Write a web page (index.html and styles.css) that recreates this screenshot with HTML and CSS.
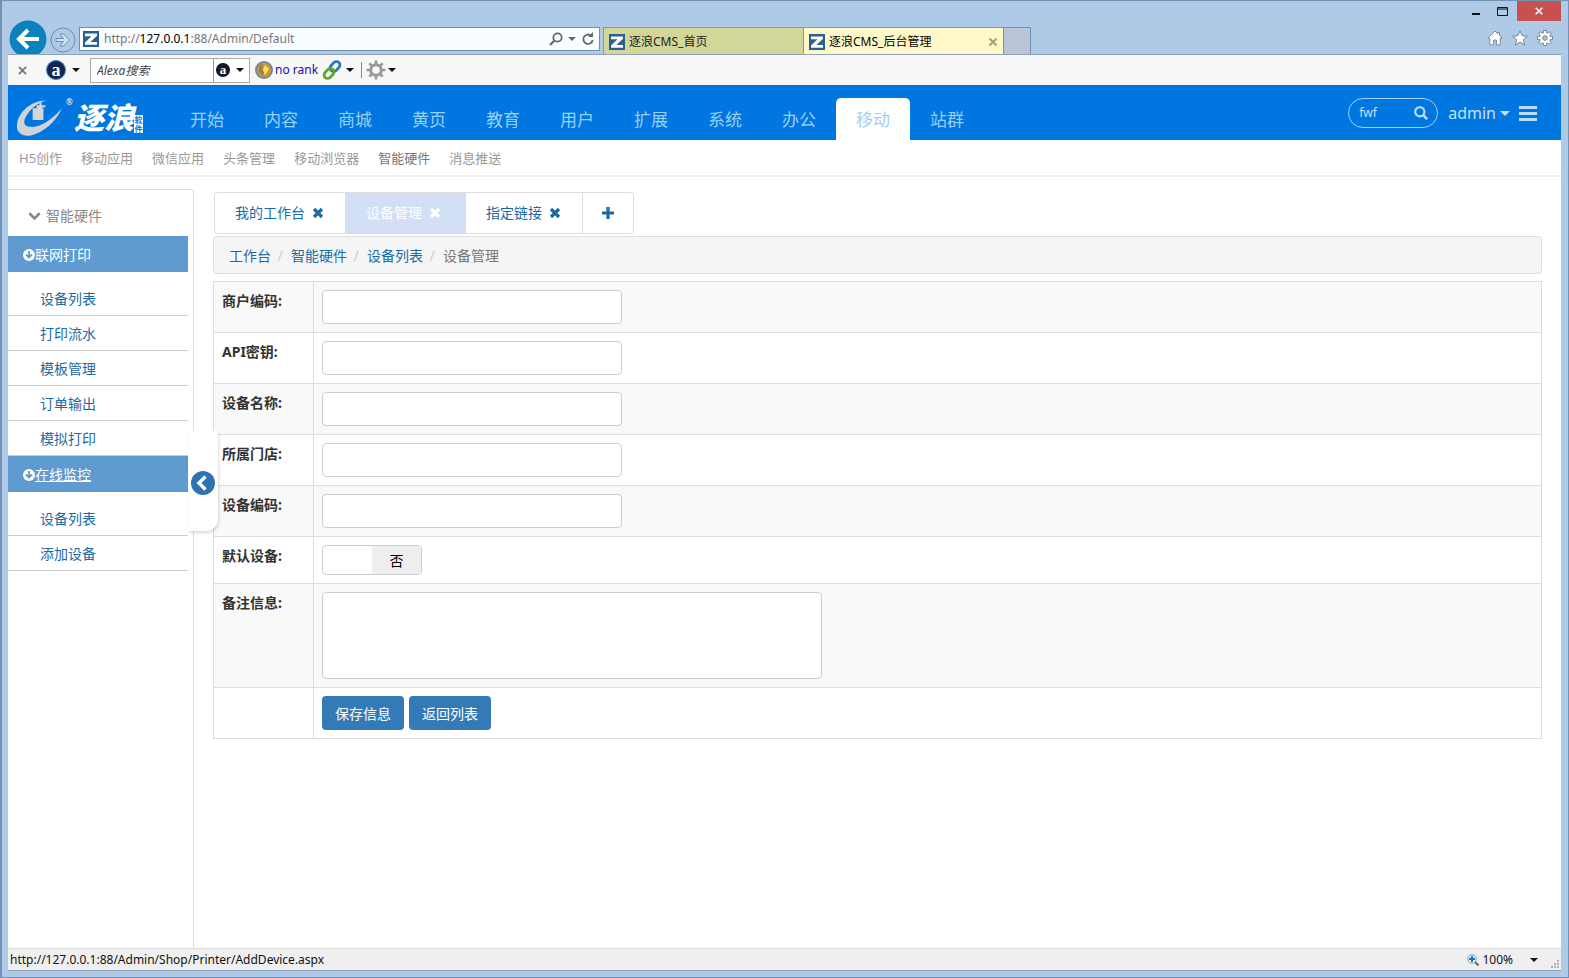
FILE: index.html
```html
<!DOCTYPE html>
<html lang="zh-CN">
<head>
<meta charset="utf-8">
<title>逐浪CMS_后台管理</title>
<link rel="stylesheet" href="styles.css">
</head>
<body>
<svg class="defs" aria-hidden="true">
  <symbol id="z" viewBox="0 0 16 16"><path fill="#28608f" d="M0 0h16v16H0z"/><path fill="#fff" d="M2 2.500h12v2.300L7.500 11H14v2.800H2v-2.300L8.500 5.300H2z"/></symbol>
  <symbol id="caret" viewBox="0 0 8 4"><path fill="currentColor" d="M0 0h8L4 4z"/></symbol>
  <symbol id="times" viewBox="0 0 12 12"><path stroke="currentColor" stroke-width="3.200" d="M2 2l8 8M10 2l-8 8"/></symbol>
  <symbol id="gear" viewBox="0 0 20 20"><path fill="none" stroke="currentColor" stroke-width="2.600" d="M10 .5v4M10 15.500v4M.5 10h4M15.500 10h4M3.300 3.300l2.900 2.900M13.800 13.800l2.900 2.900M16.700 3.300l-2.900 2.900M6.200 13.800l-2.900 2.900"/><circle cx="10" cy="10" r="5.300" fill="none" stroke="currentColor" stroke-width="3"/></symbol>
  <symbol id="down" viewBox="0 0 12 12"><circle cx="6" cy="6" r="6" fill="#fff"/><path d="M6 2v6M3 5.500l3 3 3-3" fill="none" stroke="#5f9ad0" stroke-width="1.800"/></symbol>
</svg>
<div class="window">
  <div class="chrome">
    <button class="back" aria-label="后退"><svg viewBox="0 0 38 38"><circle cx="19" cy="19" r="18.500" fill="#0b82bd"/><path d="M30 19H11M19 10l-9 9 9 9" fill="none" stroke="#fff" stroke-width="4"/></svg></button>
    <button class="forward" aria-label="前进"><svg viewBox="0 0 26 26"><circle cx="13" cy="13" r="12" fill="none" stroke="#6a88b3"/><path d="M6 11.500h7.500L10 7h3.500l6 6-6 6H10l3.500-4.500H6z" fill="#d5e2f3" stroke="#6a88b3"/></svg></button>
    <div class="address">
      <svg class="fav"><use href="#z"/></svg>
      <p class="url">http://<b>127.0.0.1</b>:88/Admin/Default</p>
      <svg class="i14" viewBox="0 0 14 14"><circle cx="8.500" cy="5.500" r="4.200" fill="none" stroke="#666" stroke-width="1.800"/><path d="M5.500 8.500l-4.500 4.500" stroke="#666" stroke-width="2.200"/></svg>
      <svg class="caret grey"><use href="#caret"/></svg>
      <svg class="i14" viewBox="0 0 14 14"><path d="M10.500 4A4.700 4.700 0 1 0 11.700 8" fill="none" stroke="#666" stroke-width="1.800"/><path d="M7 5h5V0z" fill="#666"/></svg>
    </div>
    <div class="btabs">
      <div class="btab"><svg class="fav"><use href="#z"/></svg><span>逐浪CMS_首页</span></div>
      <div class="btab on"><svg class="fav"><use href="#z"/></svg><span>逐浪CMS_后台管理</span><svg class="bx" viewBox="0 0 10 10"><path d="M1.500 1.500l7 7M8.500 1.500l-7 7" stroke="#a39f78" stroke-width="2"/></svg></div>
      <div class="newtab"></div>
    </div>
    <div class="right">
      <div class="winbtns">
        <svg class="min" viewBox="0 0 10 10"><path fill="#111" d="M1 7h8v2H1z"/></svg>
        <svg class="max" viewBox="0 0 11 9"><path fill="none" stroke="#111" d="M.5.5h10v8H.5zM1 2h9"/></svg>
        <button class="close" aria-label="关闭"><svg viewBox="0 0 8 8"><path d="M.7.7l6.600 6.600M7.300.7L.7 7.300" stroke="#fff" stroke-width="1.600"/></svg></button>
      </div>
      <div class="tools">
        <svg viewBox="0 0 16 16"><path d="M8 1L.8 8.300h2V15h3.800V10h2.800v5h3.800V8.300h2L12.500 5.200V2.500h-2v1z" fill="#fff" stroke="#7d8794"/></svg>
        <svg viewBox="0 0 16 16"><path d="M8 .8l2.100 5 5.200.4-4 3.500 1.300 5.300L8 12.200 3.400 15l1.300-5.300-4-3.500 5.200-.4z" fill="#fff" stroke="#7d8794"/></svg>
        <svg viewBox="0 0 16 16"><path d="M8 0v16M0 8h16M2.400 2.400l11.200 11.200M13.600 2.400L2.400 13.600" stroke="#7d8794" stroke-width="3.600"/><circle cx="8" cy="8" r="5.600" fill="#fff" stroke="#7d8794"/><path d="M8 1v14M1 8h14M3 3l10 10M13 3L3 13" stroke="#fff" stroke-width="2"/><circle cx="8" cy="8" r="2.300" fill="#aac4e2" stroke="#7d8794"/></svg>
      </div>
    </div>
  </div>

  <div class="alexa">
    <svg class="ax" viewBox="0 0 10 10"><path d="M1 1l8 8M9 1L1 9" stroke="#777" stroke-width="2"/></svg>
    <span class="abig">a</span><svg class="caret"><use href="#caret"/></svg>
    <div class="asearch"><input type="text" aria-label="Alexa搜索" placeholder="Alexa搜索"><span class="asmall">a</span><svg class="caret"><use href="#caret"/></svg></div>
    <svg class="globe" viewBox="0 0 18 18"><circle cx="9" cy="9" r="8" fill="#c99f35" stroke="#7d838f" stroke-width="2"/><path d="M4 5l4-2-1 5 3 2-2 5-4-4z" fill="#8b8368"/><path d="M10 4l4 4-4 6-2-5z" fill="#ffe052"/></svg>
    <span class="rank">no rank</span>
    <svg class="link" viewBox="0 0 20 20"><g fill="none" stroke-width="2.800"><rect x="9.500" y="1" width="7" height="11" rx="3.500" transform="rotate(45 13 6.500)" stroke="#2d78b5"/><rect x="3.500" y="8" width="7" height="11" rx="3.500" transform="rotate(45 7 13.500)" stroke="#5ba82c"/></g></svg>
    <svg class="caret"><use href="#caret"/></svg>
    <span class="bar"></span>
    <svg class="link gear"><use href="#gear"/></svg><svg class="caret"><use href="#caret"/></svg>
  </div>

  <header class="top">
    <a class="logo" href="#" aria-label="逐浪">
      <svg viewBox="0 0 48 38"><path d="M31 1C14 1 2 14 1 26c-1 8 5 12 13 11C29 34 41 22 47 9 37 20 25 29 15 28 8 28 7 23 10 18 14 10 21 4 31 1z" fill="#cfd3da"/><path d="M17 9h4V6h3V3h2v3h4v2h-3v1h1v12H17z" fill="#d8d5d6"/></svg>
      <span class="reg">®</span><span class="brand">逐浪</span><span class="seal">软件</span>
    </a>
    <nav class="nav">
      <a href="#">开始</a><a href="#">内容</a><a href="#">商城</a><a href="#">黄页</a><a href="#">教育</a><a href="#">用户</a><a href="#">扩展</a><a href="#">系统</a><a href="#">办公</a><a href="#" class="on">移动</a><a href="#">站群</a>
    </nav>
    <div class="user">
      <div class="search"><input type="text" value="fwf" aria-label="搜索"><svg viewBox="0 0 14 14"><circle cx="5.800" cy="5.800" r="4.600" fill="none" stroke="#b9dcf8" stroke-width="2.200"/><path d="M9.200 9.200l4 4" stroke="#b9dcf8" stroke-width="2.600"/></svg></div>
      <button class="admin">admin<svg class="ucaret"><use href="#caret"/></svg></button>
      <button class="menu" aria-label="菜单"><svg viewBox="0 0 18 15"><path fill="#b9dcf8" d="M0 0h18v3H0zM0 6h18v3H0zM0 12h18v3H0z"/></svg></button>
    </div>
  </header>

  <nav class="sub">
    <a href="#">H5创作</a><a href="#">移动应用</a><a href="#">微信应用</a><a href="#">头条管理</a><a href="#">移动浏览器</a><a href="#" class="on">智能硬件</a><a href="#">消息推送</a>
  </nav>

  <div class="body">
    <aside class="side">
      <h2><svg viewBox="0 0 14 10"><path d="M1.500 2L7 7.500 12.500 2" fill="none" stroke="#888" stroke-width="2.800"/></svg>智能硬件</h2>
      <h3><svg><use href="#down"/></svg>联网打印</h3>
      <ul><li><a href="#">设备列表</a></li><li><a href="#">打印流水</a></li><li><a href="#">模板管理</a></li><li><a href="#">订单输出</a></li><li><a href="#">模拟打印</a></li></ul>
      <h3><svg><use href="#down"/></svg><u>在线监控</u></h3>
      <ul><li><a href="#">设备列表</a></li><li><a href="#">添加设备</a></li></ul>
      <button class="collapse" aria-label="收起"><svg viewBox="0 0 24 24"><circle cx="12" cy="12" r="12" fill="#2f73b3"/><path d="M14.500 5.500L8 12l6.500 6.500" fill="none" stroke="#fff" stroke-width="3.400"/></svg></button>
    </aside>
    <main class="main">
      <div class="tabs">
        <button>我的工作台<svg><use href="#times"/></svg></button>
        <button class="on">设备管理<svg><use href="#times"/></svg></button>
        <button>指定链接<svg><use href="#times"/></svg></button>
        <button class="plus" aria-label="新增"><svg viewBox="0 0 12 12"><path d="M6 0v12M0 6h12" stroke="currentColor" stroke-width="3.200"/></svg></button>
      </div>
      <nav class="crumb"><a href="#">工作台</a><i>/</i><a href="#">智能硬件</a><i>/</i><a href="#">设备列表</a><i>/</i><span>设备管理</span></nav>
      <table class="form">
        <tr><th><label for="f1">商户编码:</label></th><td><input id="f1" type="text"></td></tr>
        <tr><th><label for="f2">API密钥:</label></th><td><input id="f2" type="text"></td></tr>
        <tr><th><label for="f3">设备名称:</label></th><td><input id="f3" type="text"></td></tr>
        <tr><th><label for="f4">所属门店:</label></th><td><input id="f4" type="text"></td></tr>
        <tr><th><label for="f5">设备编码:</label></th><td><input id="f5" type="text"></td></tr>
        <tr><th><label for="f6">默认设备:</label></th><td><label class="switch"><input id="f6" type="checkbox"><span>否</span></label></td></tr>
        <tr><th><label for="f7">备注信息:</label></th><td><textarea id="f7"></textarea></td></tr>
        <tr><th></th><td><div class="btns"><button>保存信息</button><button>返回列表</button></div></td></tr>
      </table>
    </main>
  </div>

  <footer class="status">
    <span>http://127.0.0.1:88/Admin/Shop/Printer/AddDevice.aspx</span>
    <div class="zoom">
      <svg class="zi" viewBox="0 0 12 12"><path d="M7.500 7.500l4 4" stroke="#6b665f" stroke-width="2"/><circle cx="5" cy="5" r="4.300" fill="#e3f1fb" stroke="#7aa5cc"/><path d="M5 2v6M2 5h6" stroke="#1f70b8" stroke-width="2"/></svg>
      <span>100%</span><svg class="caret"><use href="#caret"/></svg>
      <svg class="grip" viewBox="0 0 8 8"><path fill="#aab4c0" d="M6 0h2v2H6zM3 3h2v2H3zM6 3h2v2H6zM0 6h2v2H0zM3 6h2v2H3zM6 6h2v2H6z"/></svg>
    </div>
  </footer>
</div>
</body>
</html>
```
FILE: styles.css
```css
* { box-sizing: border-box; }
body {
  margin: 0;
  font-family: "Noto Sans", "Noto Sans CJK SC", sans-serif;
  font-size: 14px;
  line-height: 20px;
  color: #333;
}
.defs { display: none; }
svg { display: block; flex: none; }
a { text-decoration: none; color: #1a6ba5; }
button { font: inherit; color: inherit; border: 0; padding: 0; background: none; cursor: pointer; }
input, textarea { font: inherit; }

.window {
  min-height: 100vh;
  display: flex;
  flex-direction: column;
  background: #aecae7;
  border: 1px solid #7391b5;
  border-width: 1px 1px 1px 2px;
  padding: 0 7px 6px 6px;
}

/* browser chrome */
.chrome { display: flex; align-items: flex-end; height: 54px; overflow: hidden; border-bottom: 1px solid #8fa3bb; }
.back { width: 38px; height: 34px; margin-left: 1px; }
.back svg { width: 38px; height: 38px; }
.forward { margin: 0 3px 1px; }
.forward svg { width: 26px; height: 26px; }
.address {
  display: flex;
  align-items: center;
  gap: 5px;
  width: 521px;
  height: 24px;
  margin-bottom: 3px;
  padding: 0 4px 0 3px;
  background: #fafdff;
  border: 1px solid #6f8fb8;
  font-size: 12px;
}
.url { margin: 0; flex: 1; color: #777; }
.url b { font-weight: 400; color: #000; }
.fav { width: 16px; height: 16px; }
.i14 { width: 14px; height: 14px; }
.caret { width: 8px; height: 4px; color: #111; }
.grey { color: #666; }
.btabs { display: flex; margin-left: 3px; }
.btab {
  display: flex;
  align-items: center;
  gap: 4px;
  width: 200px;
  height: 27px;
  padding: 1px 5px 0;
  font-size: 12px;
  color: #222;
  background: #d2d698;
  border: 1px solid #8b96a2;
  border-width: 1px 0 0 1px;
}
.btab.on { background: #fff9c9; color: #000; }
.btab span { flex: 1; }
.bx { width: 10px; height: 10px; }
.newtab { width: 28px; background: #b9c5d6; border: 1px solid #7391b5; border-bottom: 0; }
.right { display: flex; flex-direction: column; align-items: flex-end; align-self: stretch; margin-left: auto; }
.winbtns { display: flex; align-items: center; }
.min { width: 10px; height: 10px; }
.max { width: 11px; height: 9px; margin: 0 9px 0 16px; }
.close { display: grid; place-items: center; width: 44px; height: 20px; background: #c75050; }
.close svg { width: 8px; height: 8px; }
.tools { display: flex; gap: 9px; padding: 9px 8px 0 0; }
.tools svg { width: 16px; height: 16px; }

/* search toolbar */
.alexa { display: flex; align-items: center; height: 30px; padding-left: 10px; background: #f7f7f7; }
.ax { width: 9px; height: 9px; margin-right: 19px; }
.abig, .asmall {
  display: grid;
  place-items: center;
  width: 20px;
  height: 20px;
  border-radius: 50%;
  background: #14264f;
  border: 1px solid #4a86c8;
  color: #fff;
  font: bold 18px/16px "Liberation Serif", serif;
}
.asmall { width: 14px; height: 14px; background: #111a28; border-color: #111a28; font-size: 13px; line-height: 12px; }
.abig + .caret { margin: 0 10px 0 6px; }
.asearch { display: flex; align-items: center; gap: 6px; width: 160px; height: 25px; padding-right: 5px; background: #fff; border: 1px solid #aaa; }
.asearch input {
  width: 124px;
  min-width: 0;
  height: 23px;
  margin-right: -4px;
  padding: 0 6px;
  border: 0;
  border-right: 1px solid #999;
  background: none;
  font-size: 12px;
  font-style: italic;
}
.asearch input::placeholder { color: #444; opacity: 1; }
.globe { width: 18px; height: 18px; margin: 0 2px 0 5px; }
.rank { color: #1a0f9c; font-size: 12px; }
.link { width: 20px; height: 20px; margin: 0 4px; }
.bar { width: 1px; height: 16px; margin-left: 7px; background: #888; }
.gear { color: #999; margin: 0 2px 0 4px; }

/* application header */
.top { display: flex; height: 55px; background: #0076e0; border-top: 1px solid #1869ae; }
.logo { display: flex; align-items: center; width: 162px; padding: 10px 0 0 8px; color: #fff; }
.logo > svg { width: 47px; height: 38px; }
.reg { align-self: flex-start; width: 8px; margin-left: 3px; font-size: 8px; line-height: 12px; }
.brand { font-size: 30px; line-height: 36px; font-weight: 900; font-style: italic; }
.seal { align-self: flex-end; width: 9px; margin-bottom: 7px; background: #fff; color: #0076e0; font-size: 8px; line-height: 9px; font-weight: 700; text-align: center; }
.nav { display: flex; align-items: flex-end; }
.nav a { padding: 1px 20px 0; font-size: 17px; line-height: 41px; color: #9ad0f8; border-radius: 5px 5px 0 0; }
.nav .on { background: #fff; color: #a5cdf3; }
.user { display: flex; align-items: center; margin: 0 24px 0 auto; color: #c4e1fa; }
.search { display: flex; align-items: center; width: 90px; height: 30px; padding: 0 9px 0 10px; border: 1px solid #a6d3f8; border-radius: 15px; }
.search input { flex: 1; min-width: 0; padding: 0; border: 0; background: none; color: #c4e1fa; font-size: 12px; }
.search svg { width: 14px; height: 14px; }
.admin { display: flex; align-items: center; gap: 4px; margin-left: 10px; font-size: 16px; }
.ucaret { width: 10px; height: 5px; color: #c4e1fa; }
.menu { margin-left: 9px; }
.menu svg { width: 18px; height: 15px; }

.sub { display: flex; gap: 19px; height: 37px; padding-left: 11px; background: #fff; border-bottom: 2px solid #eee; }
.sub a { font-size: 13px; line-height: 36px; color: #999; }
.sub .on { color: #777; }

.body { display: flex; flex: 1; background: #fff; padding-top: 12px; }
.side { position: relative; width: 186px; flex: none; padding-right: 5px; border: 1px solid #ddd; border-width: 1px 1px 0 0; border-radius: 0 4px 0 0; }
.side h2 { display: flex; align-items: center; gap: 5px; height: 46px; margin: 0; padding: 6px 0 0 20px; font-size: 14px; font-weight: 400; color: #888; }
.side h2 svg { width: 13px; height: 10px; }
.side h3 { display: flex; align-items: center; height: 36px; margin: 0; padding: 2px 0 0 15px; font-size: 14px; font-weight: 400; color: #fff; background: #5f9ad0; }
.side h3 svg { width: 12px; height: 12px; }
.side ul { list-style: none; margin: 0; padding: 9px 0 0; }
.side li { height: 35px; border-bottom: 1px solid #ccc; }
.side li a { display: block; padding-left: 32px; line-height: 35px; }
.collapse {
  position: absolute;
  left: 180px;
  top: 241px;
  display: grid;
  place-items: center;
  width: 30px;
  height: 100px;
  padding-top: 3px;
  background: #fff;
  border-radius: 0 0 12px 0;
  box-shadow: 1px 2px 3px rgba(0, 0, 0, .15);
}
.collapse svg { width: 24px; height: 24px; }

.main { flex: 1; min-width: 0; padding: 3px 19px 0; }
.tabs { display: inline-flex; height: 42px; margin-left: 1px; border: 1px solid #ddd; border-radius: 4px; vertical-align: top; }
.tabs button { display: flex; align-items: center; gap: 7px; padding: 0 21px 0 20px; color: #1a6ba5; }
.tabs button + button { border-left: 1px solid #ddd; }
.tabs svg { width: 12px; height: 12px; }
.tabs .on { background: #d2dff4; color: #fff; padding-right: 24px; }
.tabs .plus { padding: 0 19px; }
.crumb { display: flex; height: 38px; margin: 2px 0 7px; padding-left: 15px; line-height: 37px; background: #f5f5f5; border: 1px solid #ddd; border-radius: 4px; }
.crumb i { width: 20px; padding-right: 2px; text-align: center; font-style: normal; color: #ccc; }
.crumb span { color: #777; }

.form { width: 100%; border-collapse: collapse; }
.form th, .form td { border: 1px solid #ddd; padding: 8px; text-align: left; vertical-align: top; }
.form th { width: 100px; color: #333; font-weight: 700; }
.form th label { display: block; line-height: 22px; }
.form tr:nth-child(odd) { background: #f9f9f9; }
.form td > input { display: block; width: 300px; height: 34px; border: 1px solid #ccc; border-radius: 4px; background: #fff; padding: 6px 12px; }
.form textarea { display: block; width: 500px; height: 87px; border: 1px solid #ccc; border-radius: 4px; resize: none; }
.switch { display: flex; justify-content: flex-end; width: 100px; height: 30px; border: 1px solid #ccc; border-radius: 4px; overflow: hidden; background: #fff; color: #000; }
.switch input { appearance: none; flex: 1; margin: 0; }
.switch span { width: 49px; line-height: 29px; text-align: center; background: #eee; }
.btns { display: flex; gap: 5px; }
.btns button { height: 34px; padding: 2px 13px 0; color: #fff; background: #337ab7; border-radius: 4px; }

.status { display: flex; align-items: center; justify-content: space-between; height: 23px; padding: 0 2px; background: #efefef; border-top: 1px solid #ddd; border-bottom: 1px solid #8fa3bb; font-size: 12px; color: #111; }
.zoom { display: flex; align-items: center; }
.zi { width: 12px; height: 12px; margin-right: 3px; }
.zoom .caret { margin: 0 13px 0 17px; }
.grip { width: 8px; height: 8px; align-self: flex-end; margin-bottom: 2px; }
```
